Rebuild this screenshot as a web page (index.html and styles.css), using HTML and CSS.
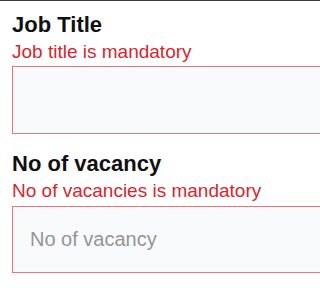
FILE: index.html
```html
<!DOCTYPE html>
<html>
<head>
<meta charset="utf-8">
<link rel="stylesheet" href="styles.css">
</head>
<body>
<div class="topbar"></div>
<form class="form">
  <div class="field">
    <label class="label" for="title">Job Title</label>
    <div class="error">Job title is mandatory</div>
    <input class="input input-first" id="title" type="text">
  </div>
  <div class="field field-second">
    <label class="label" for="vac">No of vacancy</label>
    <div class="error">No of vacancies is mandatory</div>
    <input class="input input-second" id="vac" type="text" placeholder="No of vacancy">
  </div>
</form>
</body>
</html>
```
FILE: styles.css
```css
html, body {
  margin: 0;
  padding: 0;
  background: #ffffff;
  overflow: hidden;
  font-family: "Liberation Sans", Arial, sans-serif;
}
.topbar {
  height: 1px;
  background: #3a3a3a;
}
.form {
  padding: 10px 0 0 12px;
}
.field {
  display: flex;
  flex-direction: column;
}
.field-second {
  margin-top: 16px;
}
.label {
  font-size: 22px;
  font-weight: bold;
  line-height: 28px;
  color: #111111;
}
.error {
  font-size: 19px;
  line-height: 26px;
  color: #d7262e;
}
.input {
  box-sizing: border-box;
  width: 100%;
  border: 1px solid #e8777b;
  border-right: none;
  background: #f9fafc;
  font-family: "Liberation Sans", Arial, sans-serif;
  font-size: 20px;
  padding: 0 0 0 17px;
  margin: 0;
  outline: none;
  color: #333;
}
.input-first {
  margin-top: 1px;
  height: 68px;
}
.input-second {
  margin-top: 2px;
  height: 67px;
}
.input::placeholder {
  color: #959595;
}
```
